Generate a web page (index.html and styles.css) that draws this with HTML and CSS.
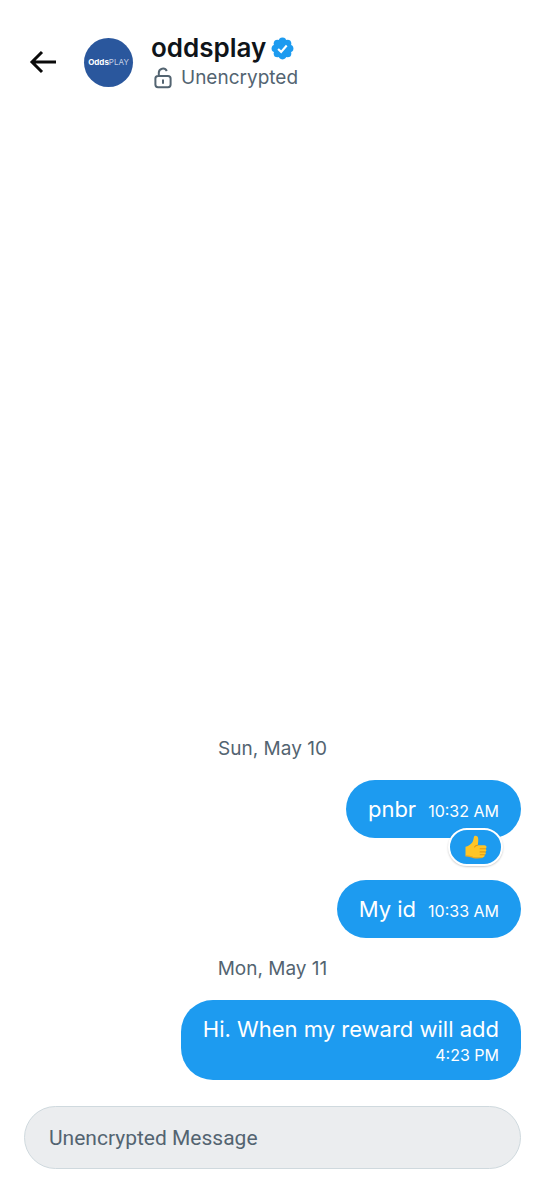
FILE: index.html
```html
<!DOCTYPE html>
<html lang="en">
<head>
<meta charset="utf-8">
<meta name="viewport" content="width=device-width, initial-scale=1">
<title>oddsplay</title>
<link rel="stylesheet" href="styles.css">
</head>
<body>
<div class="chat">
  <header class="header">
    <button class="back" type="button" aria-label="Back">
      <svg class="back-icon" viewBox="0 0 28 24" aria-hidden="true"><path d="M27 12H3M13 2L3 12l10 10"/></svg>
    </button>
    <div class="avatar"><b>Odds</b><span>PLAY</span></div>
    <div class="identity">
      <div class="name-row">
        <h1 class="name">oddsplay</h1>
        <svg class="badge" viewBox="0 0 24 24" role="img" aria-label="Verified">
          <g fill="#1d9bf0"><circle cx="12" cy="12" r="9.500"/><circle cx="12" cy="4.600" r="4"/><circle cx="17.200" cy="6.800" r="4"/><circle cx="19.400" cy="12" r="4"/><circle cx="17.200" cy="17.200" r="4"/><circle cx="12" cy="19.400" r="4"/><circle cx="6.800" cy="17.200" r="4"/><circle cx="4.600" cy="12" r="4"/><circle cx="6.800" cy="6.800" r="4"/></g>
          <path d="M7.400 12.400l3.200 3.100 5.800-6.600" fill="none" stroke="#fff" stroke-width="2.200"/>
        </svg>
      </div>
      <div class="status">
        <svg class="lock" viewBox="0 0 18 22" aria-hidden="true"><path d="M4.800 9V5.800a4.200 4.200 0 0 1 8-1.800M4 9h10a2.600 2.600 0 0 1 2.600 2.600v6A2.600 2.600 0 0 1 14 20.200H4a2.600 2.600 0 0 1-2.600-2.600v-6A2.600 2.600 0 0 1 4 9zM9 12.500v4.200"/></svg>
        <span>Unencrypted</span>
      </div>
    </div>
  </header>
  <main class="messages">
    <p class="day">Sun, May 10</p>
    <div class="bubble reacted">
      <span class="text">pnbr</span><time class="time">10:32 AM</time>
      <button class="reaction" type="button" aria-label="Thumbs up">
        <svg class="thumb" viewBox="0 0 24 24" aria-hidden="true">
          <path d="M1.500 11.800C4 11.200 6.500 9.700 8.200 7.500 9.300 6 9.600 3.600 9.900 2c.4-1.900 3.700-1.600 4.200 1 .4 2.300 0 4.700-.3 7.200h6.600c2.600 0 2.700 3.100.9 3.500 1.600.5 1.400 2.800-.2 3.200 1.200.8.800 2.600-.7 2.900.7 1-.1 2.500-1.700 2.700-3.200.4-7.200.5-9.700-.2-2.500-.700-4.500-1.500-7.500-1.500z" fill="#ffc526"/>
          <path d="M21.300 13.700h-5.200M21.100 16.900h-5M20.400 19.800h-4.200M13.600 10.200c-1.500.1-2.500.7-3 1.800" fill="none" stroke="#e49a12" stroke-width="1.100" stroke-linecap="round"/>
          <path d="M1.500 20.800c3 0 5 .7 7.500 1.500 2.500.7 6.500.6 9.700.2" fill="none" stroke="#efaa18" stroke-width="1.200"/>
        </svg>
      </button>
    </div>
    <div class="bubble"><span class="text">My id</span><time class="time">10:33 AM</time></div>
    <p class="day">Mon, May 11</p>
    <div class="bubble stacked"><span class="text">Hi. When my reward will add</span><time class="time">4:23 PM</time></div>
  </main>
  <form class="composer">
    <input class="field" type="text" placeholder="Unencrypted Message" aria-label="Unencrypted Message">
  </form>
</div>
</body>
</html>
```
FILE: styles.css
```css
* { box-sizing: border-box; }
body {
  margin: 0;
  background: #fff;
  color: #0f1419;
  font-family: Inter, "Liberation Sans", sans-serif;
}
button { border: 0; padding: 0; background: none; font: inherit; }
.chat { display: flex; flex-direction: column; min-height: 100vh; }
.header { display: flex; align-items: center; padding: 32px 24px 0 29px; }
.back { display: flex; }
.back-icon { width: 28px; height: 24px; fill: none; stroke: #0a0a0a; stroke-width: 3; }
.avatar {
  display: flex;
  align-items: center;
  justify-content: center;
  width: 49px;
  height: 49px;
  margin: 0 18px 0 27px;
  border-radius: 50%;
  background: #2a579d;
  color: #fff;
  font-size: 8px;
}
.avatar span { color: #c3d0e6; }
.name-row { display: flex; align-items: center; gap: 5px; }
.name { margin: 0; font-size: 26px; line-height: 32px; font-weight: 600; }
.badge { width: 23px; height: 23px; }
.status { display: flex; align-items: center; gap: 9px; padding-left: 3px; color: #536471; font-size: 19px; line-height: 28px; }
.lock { width: 18px; height: 22px; fill: none; stroke: #536471; stroke-width: 2; }
.messages {
  display: flex;
  flex: 1;
  flex-direction: column;
  justify-content: flex-end;
  align-items: flex-end;
  padding: 0 24px 26px;
}
.day { align-self: center; margin: 0 0 18px; color: #536471; font-size: 19px; line-height: 26px; }
.bubble {
  position: relative;
  display: flex;
  align-items: baseline;
  gap: 12px;
  margin-bottom: 18px;
  padding: 14px 22px;
  border-radius: 32px;
  background: #1d9bf0;
  color: #fff;
}
.bubble:last-child { margin-bottom: 0; }
.reacted { margin-bottom: 42px; }
.stacked { flex-direction: column; align-items: flex-end; gap: 0; }
.text { font-size: 22px; line-height: 30px; }
.time { font-size: 16px; line-height: 22px; }
.reaction {
  position: absolute;
  right: 18px;
  bottom: -28px;
  display: flex;
  align-items: center;
  justify-content: center;
  width: 55px;
  height: 38px;
  border: 2px solid #fff;
  border-radius: 19px;
  background: #1d9bf0;
  box-shadow: 0 1px 2px #0003;
}
.thumb { width: 24px; height: 24px; }
.composer { padding: 0 24px 31px; }
.field {
  display: block;
  width: 100%;
  height: 63px;
  padding: 0 24px;
  border: 1px solid #cfd9de;
  border-radius: 32px;
  background: #ebedef;
  color: #0f1419;
  font: 21px Roboto, sans-serif;
}
.field::placeholder { color: #536471; opacity: 1; }
```
